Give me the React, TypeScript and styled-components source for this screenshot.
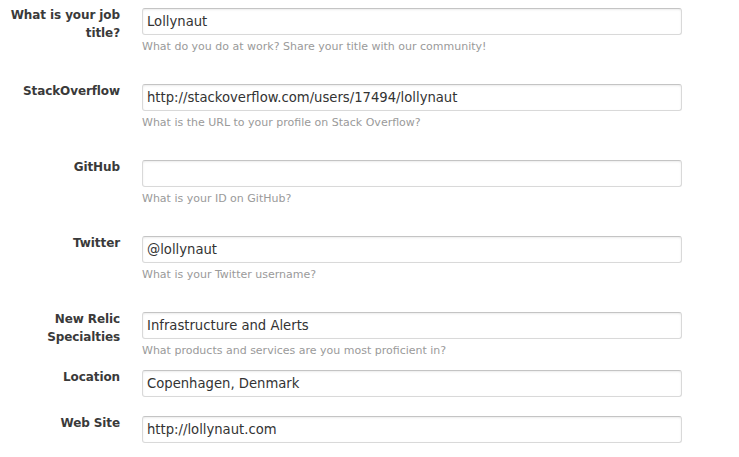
import React from "react";
import styled, { createGlobalStyle } from "styled-components";

const Global = createGlobalStyle`
  html, body { margin: 0; padding: 0; background: #fff; }
  body { font-family: "DejaVu Sans", "Liberation Sans", sans-serif; }
`;

const Form = styled.form`
  display: flex;
  flex-direction: column;
  padding-top: 8px;
  width: 739px;
`;

const Row = styled.div<{ $after: number }>`
  display: flex;
  align-items: flex-start;
  gap: 22px;
  margin-bottom: ${(p) => p.$after}px;
`;

const Label = styled.label`
  width: 120px;
  flex: none;
  text-align: right;
  font-size: 12px;
  font-weight: bold;
  line-height: 18px;
  color: #3a3a3a;
  margin-top: -2px;
  letter-spacing: -0.1px;
`;

const Field = styled.div`
  display: flex;
  flex-direction: column;
  width: 540px;
`;

const Input = styled.input`
  box-sizing: border-box;
  width: 540px;
  height: 27px;
  margin: 0;
  padding: 0 4px;
  border: 1px solid #d9d9d9;
  border-top-color: #c4c4c4;
  border-radius: 3px;
  box-shadow: inset 0 1px 2px rgba(0, 0, 0, 0.08);
  font-family: "DejaVu Sans", "Liberation Sans", sans-serif;
  font-size: 13.2px;
  color: #333;
  background: #fff;
  outline: none;
`;

const Help = styled.div`
  margin-top: 4px;
  font-size: 11px;
  line-height: 16px;
  color: #9a9a9a;
`;

type Item = { label: React.ReactNode; value: string; help?: string; after: number };

const items: Item[] = [
  {
    label: (
      <>
        What is your job
        <br />
        title?
      </>
    ),
    value: "Lollynaut",
    help: "What do you do at work? Share your title with our community!",
    after: 29,
  },
  {
    label: "StackOverflow",
    value: "http://stackoverflow.com/users/17494/lollynaut",
    help: "What is the URL to your profile on Stack Overflow?",
    after: 29,
  },
  { label: "GitHub", value: "", help: "What is your ID on GitHub?", after: 29 },
  { label: "Twitter", value: "@lollynaut", help: "What is your Twitter username?", after: 29 },
  {
    label: (
      <>
        New Relic
        <br />
        Specialties
      </>
    ),
    value: "Infrastructure and Alerts",
    help: "What products and services are you most proficient in?",
    after: 11,
  },
  { label: "Location", value: "Copenhagen, Denmark", after: 19 },
  { label: "Web Site", value: "http://lollynaut.com", after: 0 },
];

export default function App() {
  return (
    <>
      <Global />
      <Form onSubmit={(e) => e.preventDefault()}>
        {items.map((it, i) => (
          <Row key={i} $after={it.after}>
            <Label>{it.label}</Label>
            <Field>
              <Input defaultValue={it.value} />
              {it.help && <Help>{it.help}</Help>}
            </Field>
          </Row>
        ))}
      </Form>
    </>
  );
}
